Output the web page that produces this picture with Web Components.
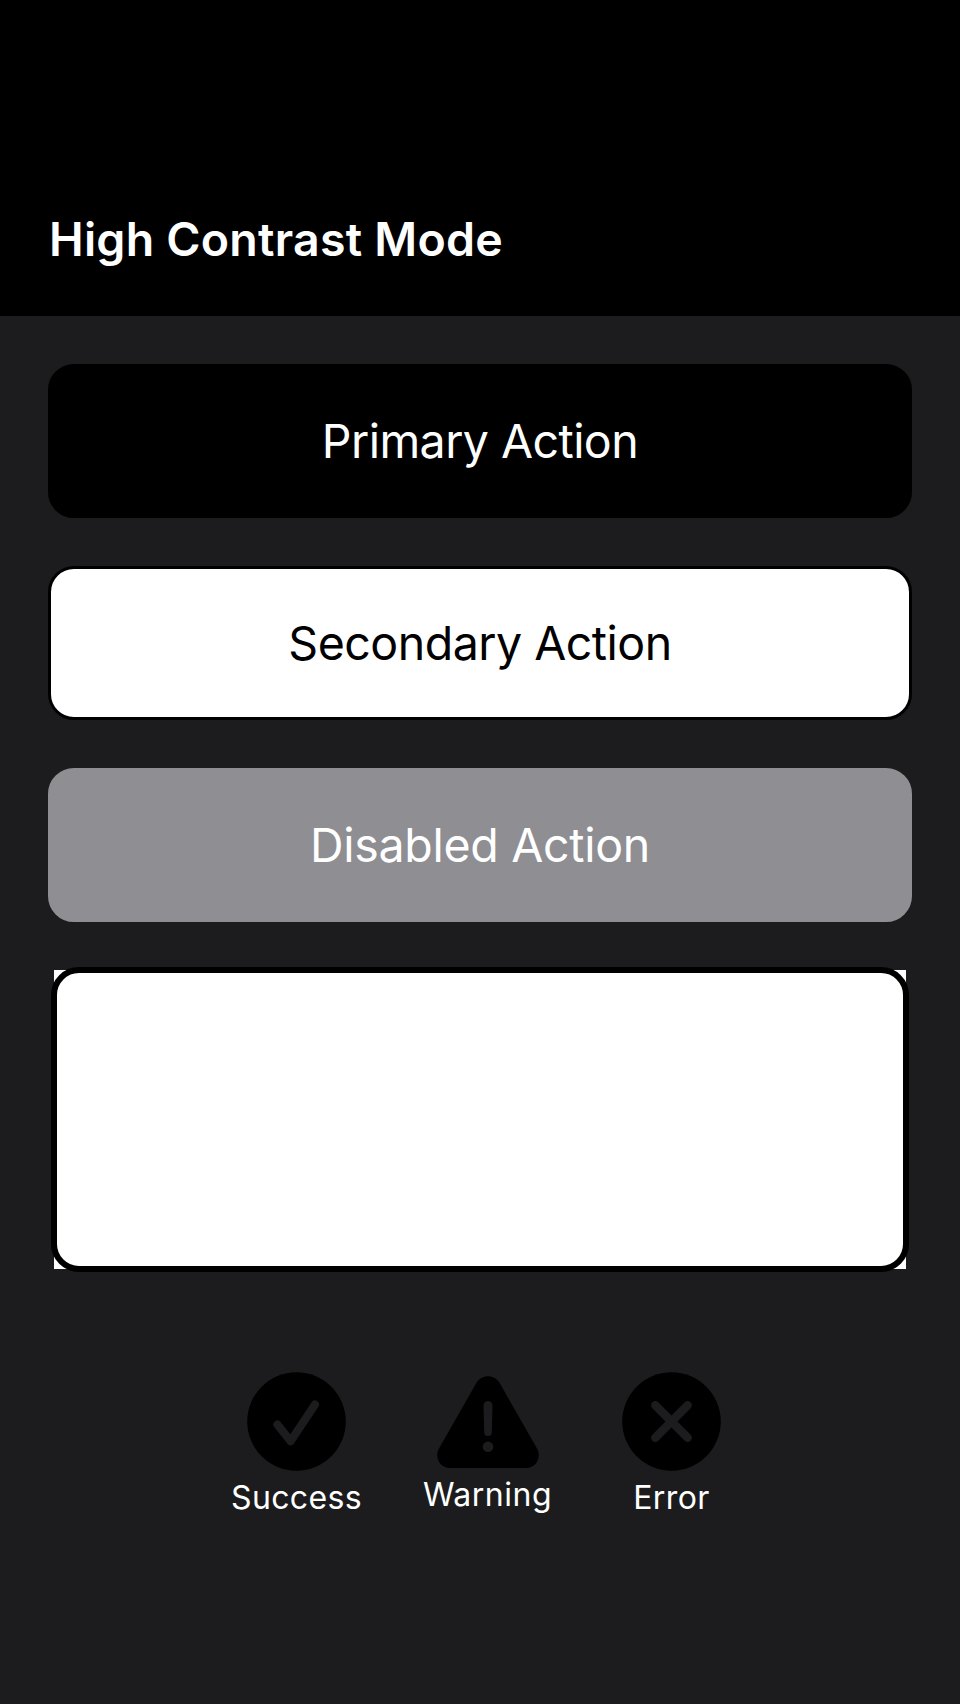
<!DOCTYPE html>
<html lang="en">
<head>
<meta charset="utf-8">
<title>High Contrast Mode</title>
<style>
html,body{margin:0;background:#1c1c1e}
body{font-family:Inter,"Liberation Sans",sans-serif;color:#fff}
</style>
</head>
<body>
<contrast-app></contrast-app>
<script>
function define(name, html) {
  const t = document.createElement('template');
  t.innerHTML = html;
  customElements.define(name, class extends HTMLElement {
    constructor() {
      super();
      this.attachShadow({ mode: 'open' }).appendChild(t.content.cloneNode(true));
    }
  });
}
define('app-header', `<style>
:host{display:flex;align-items:flex-end;box-sizing:border-box;height:316px;padding:0 49px 48px;background:#000}
h1{margin:0;font-size:46.5px;line-height:58px;font-weight:590;letter-spacing:.24px;white-space:nowrap}
</style><h1><slot></slot></h1>`);
define('action-button', `<style>
:host{display:block;height:154px}
button{box-sizing:border-box;display:block;width:100%;height:100%;margin:0;padding:0;border:3px solid #000;border-radius:26px;background:#000;color:#fff;font:400 46.5px/58px Inter,"Liberation Sans",sans-serif;letter-spacing:var(--track,-.55px)}
:host([kind=secondary]) button{background:#fff;color:#000}
:host([kind=disabled]) button{background:#8e8e93;border-color:#8e8e93}
</style><button><slot></slot></button>`);
define('outline-card', `<style>
:host{display:block;height:299px;margin:0 6px;background:#fff}
div{position:relative;left:-3px;top:-3px;box-sizing:border-box;width:calc(100% + 6px);height:305px;border:6px solid #000;border-radius:28px}
</style><div></div>`);
define('status-item', `<style>
:host{display:flex;flex-direction:column;align-items:center}
span{font-size:32px;line-height:38px;letter-spacing:var(--track,.35px);white-space:nowrap}
</style><slot name="icon"></slot><span><slot></slot></span>`);
define('icon-check', `<style>:host,svg{display:block}:host{height:107px}</style>
<svg width="99" height="99" viewBox="0 0 99 99"><circle cx="49.5" cy="49.5" r="49.3"/><path d="M30.4 52.6L43.6 69.3L68 32.6" fill="none" stroke="#1c1c1e" stroke-width="8.1" stroke-linecap="round" stroke-linejoin="round"/></svg>`);
define('icon-warning', `<style>:host,svg{display:block}:host{height:104px}</style>
<svg width="102" height="99" viewBox="0 0 102 99"><path d="M39.5 10.8C44.7 2 57.3 2 62.5 10.8L100 76.5C105 85.5 99 96 88.8 96H13.2C3 96-3 85.5 2 76.5Z"/><path d="M46.5 33.5A4.5 4.5 0 0 1 55.5 33.5L54.8 60.2A3.8 3.8 0 0 1 47.2 60.2Z" fill="#1c1c1e"/><circle cx="51" cy="74.7" r="5.3" fill="#1c1c1e"/></svg>`);
define('icon-error', `<style>:host,svg{display:block}:host{height:107px}</style>
<svg width="99" height="99" viewBox="0 0 99 99"><circle cx="49.5" cy="49.5" r="49.3"/><path d="M33.3 33.3L65.7 65.7M65.7 33.3L33.3 65.7" stroke="#1c1c1e" stroke-width="8.4" stroke-linecap="round"/></svg>`);
define('contrast-app', `<style>
:host{display:flex;flex-direction:column;height:1704px;background:#1c1c1e}
main{display:flex;flex-direction:column;gap:48px;padding:48px}
.status{display:grid;grid-template-columns:132px 130px 118px;column-gap:60px;justify-content:center;align-items:start;padding-top:55px;margin-left:1px}
</style>
<app-header>High Contrast Mode</app-header>
<main>
<action-button>Primary Action</action-button>
<action-button kind="secondary" style="--track:-.5px">Secondary Action</action-button>
<action-button kind="disabled" style="--track:-.3px">Disabled Action</action-button>
<outline-card></outline-card>
<div class="status">
<status-item><icon-check slot="icon"></icon-check>Success</status-item>
<status-item style="--track:.5px"><icon-warning slot="icon"></icon-warning>Warning</status-item>
<status-item style="--track:.4px"><icon-error slot="icon"></icon-error>Error</status-item>
</div>
</main>`);
</script>
</body>
</html>
